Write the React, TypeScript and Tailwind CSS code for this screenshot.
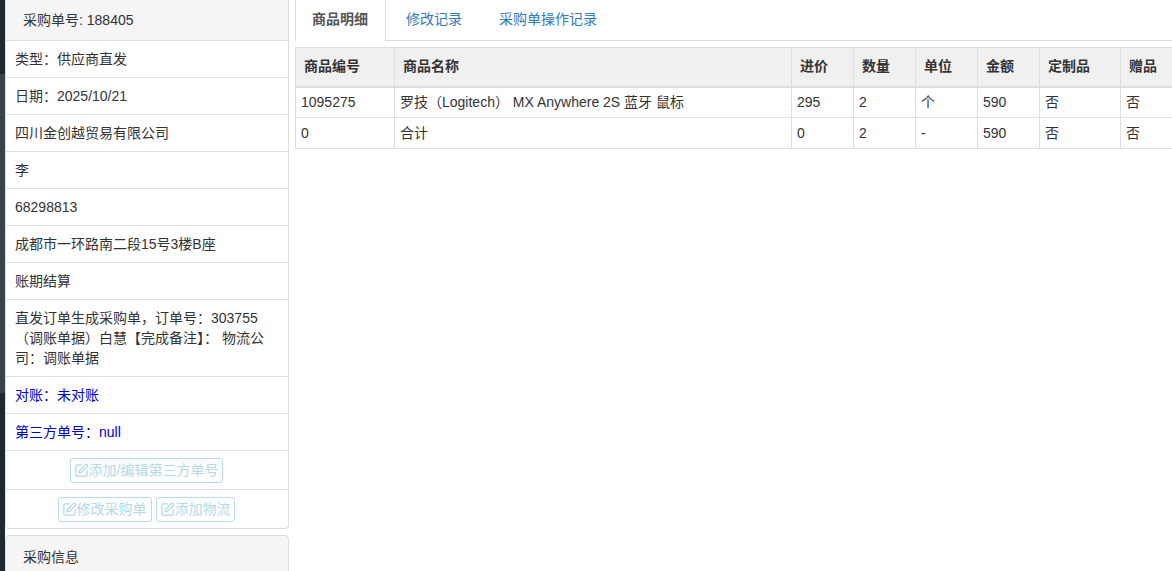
import React from "react";
import { SquarePen } from "lucide-react";

function Row({ children, blue }: { children: React.ReactNode; blue?: boolean }) {
  return (
    <div className={`border-b border-[#ddd] px-[9px] py-2 text-sm leading-5 ${blue ? "text-[#0000cc]" : "text-[#333]"}`}>
      {children}
    </div>
  );
}

function Btn({ children, wide }: { children: React.ReactNode; wide?: boolean }) {
  return (
    <span className={`inline-flex h-[25px] items-center rounded-[3px] border border-[#b9dde8] pl-[3px] text-sm leading-5 text-[#b3d9e6] ${wide ? "pr-[4px]" : "pr-[3px]"}`}>
      <SquarePen size={15} strokeWidth={2} className="shrink-0" />
      {children}
    </span>
  );
}

const heads = ["商品编号", "商品名称", "进价", "数量", "单位", "金额", "定制品", "赠品"];
const widths = ["w-[99px]", "w-[397px]", "w-[62px]", "w-[62px]", "w-[62px]", "w-[62px]", "w-[81px]", "w-[53px]"];
const rows = [
  ["1095275", "罗技（Logitech） MX Anywhere 2S 蓝牙 鼠标", "295", "2", "个", "590", "否", "否"],
  ["0", "合计", "0", "2", "-", "590", "否", "否"],
];

export default function App() {
  return (
    <div
      className="flex h-[571px] w-[1172px] overflow-hidden bg-white text-sm text-[#333]"
      style={{ fontFamily: '"Liberation Sans", "Noto Sans CJK SC", sans-serif' }}
    >
      <div className="flex w-[5px] shrink-0 flex-col">
        <div className="h-[74px] bg-[#1e2a33]" />
        <div className="h-[319px] bg-[#36434f]" />
        <div className="flex-1 bg-[#1e2a33]" />
      </div>

      <div className="w-[284px] shrink-0">
        <div className="rounded-b-[4px] border border-t-0 border-[#ddd]">
          <div className="h-[41px] border-b border-[#ddd] bg-[#f5f5f5] pl-[17px] pt-[10px] text-sm leading-5">采购单号: 188405</div>
          <Row>类型：供应商直发</Row>
          <Row>日期：2025/10/21</Row>
          <Row>四川金创越贸易有限公司</Row>
          <Row>李</Row>
          <Row>68298813</Row>
          <Row>成都市一环路南二段15号3楼B座</Row>
          <Row>账期结算</Row>
          <Row>直发订单生成采购单，订单号：303755（调账单据）白慧【完成备注】： 物流公司：调账单据</Row>
          <Row blue>对账：未对账</Row>
          <Row blue>第三方单号：null</Row>
          <div className="flex h-[39px] items-center justify-center border-b border-[#ddd] pr-px">
            <Btn wide>添加/编辑第三方单号</Btn>
          </div>
          <div className="flex h-[38px] items-center justify-center gap-1 pr-[2px]">
            <Btn wide>修改采购单</Btn>
            <Btn>添加物流</Btn>
          </div>
        </div>
        <div className="mt-[6px] h-[60px] rounded-t-[4px] border border-[#ddd] bg-[#f5f5f5] pl-[17px] pt-[11px] text-sm leading-5">采购信息</div>
      </div>

      <div className="ml-[6px] w-[877px] shrink-0">
        <div className="flex h-[41px] border-b border-[#ddd]">
          <div className="-mb-px h-[41px] w-[91px] border-x border-[#ddd] bg-white pl-4 pt-[9px] font-bold leading-5 text-[#555]">商品明细</div>
          <div className="ml-[3px] px-[17px] pt-[9px] leading-5 text-[#337ab7]">修改记录</div>
          <div className="ml-[3px] px-[17px] pt-[9px] leading-5 text-[#337ab7]">采购单操作记录</div>
        </div>
        <table className="mt-[6px] w-[878px] table-fixed border-collapse text-sm">
          <thead>
            <tr className="h-[39px] bg-[#f0f0f0]">
              {heads.map((h, i) => (
                <th key={h} className={`${widths[i]} border border-b-2 border-[#ddd] px-2 pb-[2px] text-left font-bold leading-5 text-[#333]`}>
                  {h}
                </th>
              ))}
            </tr>
          </thead>
          <tbody>
            {rows.map((r) => (
              <tr key={r[0]} className="h-[31px]">
                {r.map((c, i) => (
                  <td key={i} className="whitespace-pre border border-[#ddd] px-[5px] leading-5 text-[#333]">
                    {c}
                  </td>
                ))}
              </tr>
            ))}
          </tbody>
        </table>
      </div>
    </div>
  );
}
